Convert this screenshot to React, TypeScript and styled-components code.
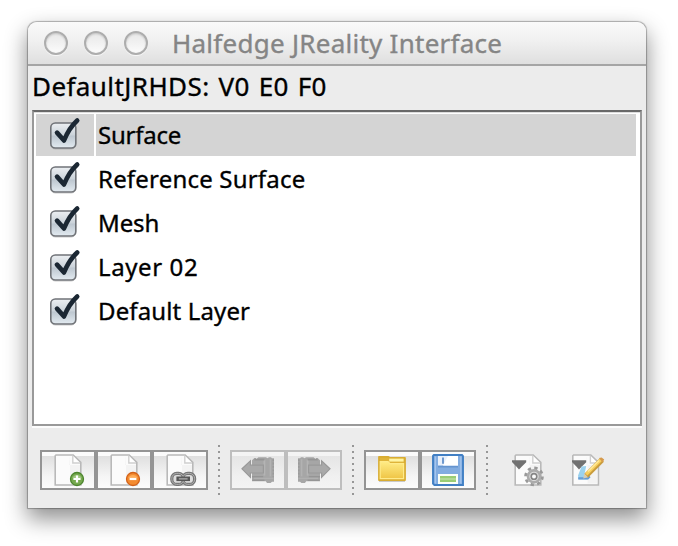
import React, { useState } from 'react';
import styled, { createGlobalStyle } from 'styled-components';

const GlobalStyle = createGlobalStyle`
  * { box-sizing: border-box; }
  body { margin: 0; background: #fff; overflow: hidden; font-family: "Noto Sans", "Open Sans", sans-serif; }
`;

const Desktop = styled.div`
  width: 678px;
  height: 546px;
  padding: 22px 32px 38px 28px;
  overflow: hidden;
`;

const Window = styled.main`
  display: flex;
  flex-direction: column;
  width: 618px;
  height: 486px;
  background: #ececec;
  border-radius: 9px 9px 0 0;
  box-shadow: 0 0 1px 0.5px rgba(0, 0, 0, 0.28), 0 10px 22px 1px rgba(0, 0, 0, 0.44);
`;

const TitleBar = styled.header`
  display: flex;
  align-items: center;
  height: 44px;
  padding-left: 16px;
  border-bottom: 2px solid #a5a5a5;
  border-radius: 9px 9px 0 0;
  background: linear-gradient(#fafafa, #f0f0f0 45%, #dfdfdf);
`;

const WindowControls = styled.div`
  display: flex;
  gap: 16px;
`;

const Control = styled.span`
  width: 24px;
  height: 24px;
  border: 2px solid #adadad;
  border-radius: 50%;
  background: linear-gradient(#e8e8e8, #f3f3f3 60%, #fcfcfc);
  box-shadow: inset 0 1px 2px #c4c4c4, 0 1px 0 #f8f8f8;
`;

const Title = styled.h1`
  margin: 0 0 0 24px;
  font-size: 26px;
  font-weight: 400;
  line-height: 42px;
  letter-spacing: 0.26px;
  color: #858585;
  -webkit-text-stroke: 0.35px #858585;
  white-space: nowrap;
`;

const Status = styled.div`
  height: 44px;
  padding-left: 4px;
  font-size: 26px;
  line-height: 40px;
  letter-spacing: 0.42px;
  word-spacing: 1.7px;
  color: #000;
  -webkit-text-stroke: 0.35px #000;
  white-space: nowrap;
`;

const LayerList = styled.div`
  width: 610px;
  height: 316px;
  margin-left: 4px;
  padding: 2px 4px 0 2px;
  border: 2px solid #999;
  border-top-color: #696969;
  background: #fff;
  box-shadow: 0 2px 0 #fcfcfc, inset 0 1px 0 #ddd;
`;

const Row = styled.div`
  display: grid;
  grid-template-columns: 58px 540px;
  column-gap: 2px;
  height: 42px;
  margin-bottom: 2px;
`;

const Cell = styled.div<{ $selected: boolean }>`
  display: flex;
  align-items: center;
  padding-left: 2px;
  background: ${(p) => (p.$selected ? '#d4d4d4' : '#fff')};
`;

const CheckCell = styled(Cell)`
  padding-left: 13px;
`;

const LayerName = styled.span<{ $spacing: number }>`
  font-size: 24px;
  line-height: 42px;
  letter-spacing: ${(p) => p.$spacing}px;
  white-space: nowrap;
  color: #000;
  -webkit-text-stroke: 0.35px #000;
`;

const Toolbar = styled.footer`
  display: flex;
  height: 82px;
  padding: 24px 0 0 12px;
`;

const ButtonGroup = styled.div`
  display: flex;
`;

const ToolButton = styled.button`
  display: grid;
  place-items: center;
  width: 56px;
  height: 40px;
  padding: 0;
  border: 2px solid #949494;
  background: linear-gradient(#fbfbfb 0 4px, #dfdfdf 4px, #f5f5f5 24px, #fcfcfc) padding-box;
  &:disabled {
    border-color: #bebebe;
    background: linear-gradient(#f4f4f4 0 4px, #e5e5e5 4px, #f0f0f0 24px, #f4f4f4) padding-box;
  }
`;

const FlatButton = styled.button`
  display: block;
  width: 32px;
  height: 32px;
  margin: 4px 28px 0 0;
  padding: 0;
  border: 0;
  background: none;
`;

const Separator = styled.span<{ $after: number }>`
  width: 2px;
  height: 50px;
  margin: -5px ${(p) => p.$after}px 0 10px;
  background: repeating-linear-gradient(#979797 0 2px, transparent 2px 6px);
`;

const Glyph = styled.svg`
  display: block;
  width: 32px;
  height: 32px;
  overflow: visible;
`;

const CheckGlyph = styled.svg`
  display: block;
  width: 34px;
  height: 38px;
  margin: -5px 0 0 -1px;
`;

const Checkmark = () => (
  <CheckGlyph viewBox="0 0 34 38">
    <defs>
      <linearGradient id="box" x2="0" y2="1">
        <stop stopColor="#eceff2" />
        <stop offset=".48" stopColor="#cbd3da" />
        <stop offset=".52" stopColor="#bdc7d0" />
        <stop offset="1" stopColor="#e3ebf1" />
      </linearGradient>
    </defs>
    <rect x="2.8" y="10" width="25" height="25" rx="4.5" fill="none" stroke="#9a9a9a" strokeOpacity=".5" />
    <rect x="2.8" y="9" width="25" height="25" rx="4.5" fill="url(#box)" stroke="#707378" strokeWidth="1.6" />
    <path d="M9 18.6 16 26.5Q21 14 29.2 6.5" fill="none" stroke="#1b2733" strokeWidth="4.6" strokeLinecap="round" strokeLinejoin="round" />
  </CheckGlyph>
);

const Sheet = ({ x = 1 }: { x?: number }) => (
  <g transform={`translate(${x} 0)`}>
    <path d="M1 .5H9.6L13.4 4.2V15.5H.6V.9Z" fill="#fbfbfb" stroke="#b9b9b9" strokeWidth=".8" />
    <path d="M7.5 1V5.5H13V14.8H8V6Z" fill="#eee" opacity=".6" />
    <path d="M9.4 1V4.5H13" fill="#fff" stroke="#d0d0d0" strokeWidth=".7" />
  </g>
);

const Badge = ({ kind }: { kind: 'add' | 'remove' }) => {
  const add = kind === 'add';
  return (
    <g>
      <circle cx="12.5" cy="12.5" r="3.25" fill={add ? '#76a94f' : '#f38b30'} stroke={add ? '#4c852d' : '#d36118'} strokeWidth=".65" />
      <path d="M10.2 12a2.5 2.5 0 0 1 4.6 0Z" fill={add ? '#a1c882' : '#ffad59'} />
      <path d={add ? 'M10.7 12.5h3.6M12.5 10.7v3.6' : 'M10.8 12.5h3.4'} stroke="#fff" strokeWidth="1.1" />
    </g>
  );
};

const NewIcon = () => <Glyph viewBox="0 0 16 16"><Sheet /><Badge kind="add" /></Glyph>;
const DeleteIcon = () => <Glyph viewBox="0 0 16 16"><Sheet /><Badge kind="remove" /></Glyph>;

const LinkIcon = () => (
  <Glyph viewBox="0 0 16 16">
    <Sheet />
    <rect x="3.9" y="9.7" width="5.9" height="5.5" rx="2.5" fill="#ddd" stroke="#757575" strokeWidth="1.6" />
    <rect x="9.4" y="9.7" width="5.9" height="5.5" rx="2.5" fill="#ddd" stroke="#757575" strokeWidth="1.6" />
    <rect x="3.9" y="9.7" width="5.9" height="5.5" rx="2.5" fill="none" stroke="#b0b0b0" strokeWidth=".5" />
    <rect x="9.4" y="9.7" width="5.9" height="5.5" rx="2.5" fill="none" stroke="#b0b0b0" strokeWidth=".5" />
    <path d="M6.2 12.4h6.8" stroke="#555" strokeWidth="2.3" />
    <path d="M7.4 12.4h4.4" stroke="#999" strokeWidth=".9" />
  </Glyph>
);

const TransferIcon = ({ flip = false }: { flip?: boolean }) => (
  <Glyph viewBox="0 0 16 16">
    <g transform={flip ? 'matrix(-1 0 0 1 16 0)' : undefined}>
      <path d="M5 3.1 6.2 2H7v.8L8.2 1.6H12l.7.5.8-.5h1l.5.5h1v11.8h-1l-.7.6h-1.8l-.6-.9H5v-3.4Z" fill="#a6a6a6" />
      <path d="M11.2 2.8v8" stroke="#b4b4b4" strokeWidth=".9" />
      <path d="M14.2 2.6v8.6" stroke="#b2b2b2" strokeWidth=".8" />
      <path d="M15.6 2.6v9" stroke="#989898" strokeWidth=".6" strokeDasharray=".9 .8" />
      <path d="M6.2 2.8h5M5 11.4h5.6M5.2 13.1h6" stroke="#959595" strokeWidth=".8" />
      <path d="M6 12.2h9.8" stroke="#b0b0b0" strokeWidth=".7" />
      <path d="M0 7.4 4.2 3.4V5.6H10.7V9.5H4.2v2.2Z" fill="#a9a9a9" stroke="#999" strokeWidth=".6" />
    </g>
  </Glyph>
);

const FolderIcon = () => (
  <Glyph viewBox="0 0 16 16">
    <path d="M1.5 13.6h13" stroke="#999" strokeOpacity=".5" strokeWidth=".8" />
    <path d="M1.5 1.4H6L7 2h7.5v11h-13Z" fill="#dfb439" stroke="#d8ac32" strokeWidth=".9" strokeLinejoin="round" />
    <path d="M6.6 2.3H13.8v1.5H6.6Z" fill="#fff4a2" />
    <path d="M2.1 3.8H6L7 4.8h6.8v7.5H2.1Z" fill="url(#folderFill)" stroke="#ffeb8b" strokeWidth=".6" />
    <defs><linearGradient id="folderFill" x2="0" y2="1"><stop stopColor="#ffec85" /><stop offset="1" stopColor="#efc546" /></linearGradient></defs>
  </Glyph>
);

const SaveIcon = () => (
  <Glyph viewBox="0 0 16 16">
    <path d="M.9.5H15l.5.6v14.4H1.2L.5 14.8V.9Z" fill="#82ace0" stroke="#417fc4" strokeWidth=".95" />
    <path d="M1.7 1.2v13.5M14.4 1.2v13.5" stroke="#a5c5ed" strokeWidth=".6" />
    <path d="M3 1h10v4.7H3Z" fill="#e9f0fa" />
    <path d="M8 1h5v4.7H5.5Z" fill="#fff" />
    <path d="M5 1.7h1v3.2H5Z" fill="#6f99ce" />
    <path d="M3 6.4h10" stroke="#5e8fcb" strokeWidth=".6" />
    <path d="M3 10h10v5H3Z" fill="#fbfff8" />
    <path d="M4 11h8v3H4Z" fill="#9acd75" />
    <path d="M4 12.5h8" stroke="#bee0a4" strokeWidth=".7" />
  </Glyph>
);

const DropArrow = () => <path d="M0 3.1h7.1v1L4.8 6.4 3.5 7.8 2.3 6.4 0 4Z" fill="#717171" />;

const SettingsIcon = () => (
  <Glyph viewBox="0 0 16 16">
    <Sheet />
    <circle cx="11" cy="11.2" r="4.2" fill="none" stroke="#999" strokeWidth="1.4" strokeDasharray="1.65 1.65" />
    <circle cx="11" cy="11.2" r="3" fill="#ddd" stroke="#ababab" strokeWidth="1.3" />
    <circle cx="11" cy="11.2" r="1.4" fill="#fafafa" stroke="#858585" strokeWidth=".8" />
    <DropArrow />
  </Glyph>
);

const EditIcon = () => (
  <Glyph viewBox="0 0 16 16">
    <Sheet x={-0.2} />
    <DropArrow />
    <path d="M4.8 6.2 3 10.8 3.3 12.7h4.5l1.2-1.6-3 .3 1.1-5.4Z" fill="#9bd2ee" />
    <path d="M3.1 12.2h4.8l1-1" fill="none" stroke="#679cd4" strokeWidth="1.1" />
    <path d="M7 10.9 15 2.9" stroke="#c99c3d" strokeWidth="2.7" />
    <path d="M7.1 10.2 14.5 2.8" stroke="#f7cf5e" strokeWidth="1.65" />
    <path d="M8 8.8 13.6 3.2" stroke="#ffe99c" strokeWidth=".7" />
    <path d="m6.2 9.8 1.8 1.8-2.4.6Z" fill="#d6cbb1" />
    <path d="m13.5 2 1.3-.2 1.3 1-.8 1.4Z" fill="#d69a4c" />
  </Glyph>
);

const layers = [
  { name: 'Surface', spacing: -0.25 },
  { name: 'Reference Surface', spacing: 0.2 },
  { name: 'Mesh', spacing: -0.1 },
  { name: 'Layer 02', spacing: 0.6 },
  { name: 'Default Layer', spacing: 0.13 },
];

export default function App() {
  const [selected, setSelected] = useState(0);
  return (
    <>
      <GlobalStyle />
      <Desktop>
        <Window>
          <TitleBar>
            <WindowControls><Control /><Control /><Control /></WindowControls>
            <Title>Halfedge JReality Interface</Title>
          </TitleBar>
          <Status>DefaultJRHDS: V0 E0 F0</Status>
          <LayerList>
            {layers.map(({ name, spacing }, i) => (
              <Row key={name} onClick={() => setSelected(i)}>
                <CheckCell $selected={i === selected}><Checkmark /></CheckCell>
                <Cell $selected={i === selected}><LayerName $spacing={spacing}>{name}</LayerName></Cell>
              </Row>
            ))}
          </LayerList>
          <Toolbar>
            <ButtonGroup>
              <ToolButton aria-label="New layer"><NewIcon /></ToolButton>
              <ToolButton aria-label="Delete layer"><DeleteIcon /></ToolButton>
              <ToolButton aria-label="Merge layers"><LinkIcon /></ToolButton>
            </ButtonGroup>
            <Separator $after={10} />
            <ButtonGroup>
              <ToolButton disabled aria-label="Undo"><TransferIcon /></ToolButton>
              <ToolButton disabled aria-label="Redo"><TransferIcon flip /></ToolButton>
            </ButtonGroup>
            <Separator $after={10} />
            <ButtonGroup>
              <ToolButton aria-label="Open"><FolderIcon /></ToolButton>
              <ToolButton aria-label="Save"><SaveIcon /></ToolButton>
            </ButtonGroup>
            <Separator $after={24} />
            <FlatButton aria-label="Settings"><SettingsIcon /></FlatButton>
            <FlatButton aria-label="Appearance"><EditIcon /></FlatButton>
          </Toolbar>
        </Window>
      </Desktop>
    </>
  );
}
